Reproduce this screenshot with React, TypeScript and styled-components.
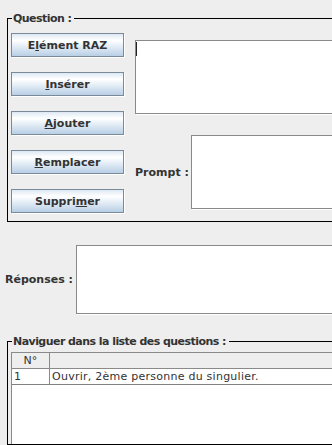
import React from "react";
import styled, { createGlobalStyle } from "styled-components";

const GlobalStyle = createGlobalStyle`
  html, body {
    margin: 0;
    padding: 0;
    background: #eeeeee;
    overflow: hidden;
  }
  body {
    font-family: "DejaVu Sans", "Liberation Sans", sans-serif;
    color: #333333;
  }
`;

const Viewport = styled.div`
  width: 332px;
  height: 445px;
  overflow: hidden;
`;

const Page = styled.div`
  width: 380px;
  height: 445px;
  padding-top: 18px;
  box-sizing: border-box;
  display: flex;
  flex-direction: column;
`;

const Group = styled.div<{ $h?: number; $mt?: number }>`
  position: relative;
  margin-left: 7px;
  margin-top: ${(p) => p.$mt ?? 0}px;
  border: 1px solid #000000;
  ${(p) => (p.$h ? `height: ${p.$h}px;` : "flex: 1;")}
  box-sizing: border-box;
  display: flex;
  flex-direction: column;
`;

const GroupTitle = styled.span`
  position: absolute;
  top: -8px;
  left: 4px;
  padding: 0 3px 0 1px;
  background: #eeeeee;
  font-size: 11px;
  font-weight: bold;
  letter-spacing: -0.55px;
  line-height: 15px;
  color: #333333;
  white-space: nowrap;
`;

const QuestionBody = styled.div`
  display: flex;
  padding: 14px 0 0 3px;
  gap: 11px;
`;

const ButtonColumn = styled.div`
  display: flex;
  flex-direction: column;
  gap: 15px;
  width: 113px;
  flex-shrink: 0;
`;

const Button = styled.button`
  height: 24px;
  width: 113px;
  border: 1px solid #7a8a99;
  border-radius: 0;
  background: linear-gradient(
    to bottom,
    #dde8f3 0%,
    #ffffff 28%,
    #f4f8fc 40%,
    #b8cfe5 100%
  );
  box-shadow: 1px 1px 0 #ffffff;
  font-family: "DejaVu Sans", "Liberation Sans", sans-serif;
  font-size: 11px;
  font-weight: bold;
  color: #333333;
  padding: 0;
  cursor: default;
  u {
    text-decoration: underline;
    text-underline-offset: 1px;
  }
`;

const RightColumn = styled.div`
  flex: 1;
  display: flex;
  flex-direction: column;
  padding-top: 7px;
`;

const TextBox = styled.div<{ $h: number; $fixed?: boolean }>`
  height: ${(p) => p.$h}px;
  background: #ffffff;
  border: 1px solid #8a8a8a;
  box-shadow: 1px 1px 0 #ffffff;
  box-sizing: border-box;
  flex: ${(p) => (p.$fixed ? "none" : "1")};
  padding: 1px 0 0 0;
`;

const Caret = styled.span`
  display: block;
  width: 1px;
  height: 14px;
  background: #222222;
`;

const PromptRow = styled.div`
  display: flex;
  align-items: center;
  margin-top: 21px;
  gap: 4px;
`;

const FieldLabel = styled.span<{ $w: number }>`
  width: ${(p) => p.$w}px;
  flex-shrink: 0;
  font-size: 11px;
  font-weight: bold;
  color: #333333;
  white-space: nowrap;
`;

const ReponsesRow = styled.div`
  display: flex;
  align-items: center;
  margin-top: 23px;
  padding-left: 5px;
  gap: 4px;
`;

const TableArea = styled.div`
  flex: 1;
  margin: 10px 0 0 3px;
  background: #ffffff;
  border-left: 1px solid #8a8a8a;
  border-top: 1px solid #8a8a8a;
  display: flex;
  flex-direction: column;
`;

const Row = styled.div<{ $header?: boolean }>`
  display: grid;
  grid-template-columns: 38px 1fr;
  height: 16px;
  box-sizing: border-box;
  background: ${(p) => (p.$header ? "#eeeeee" : "#ffffff")};
  border-bottom: 1px solid ${(p) => (p.$header ? "#8a8a8a" : "#808080")};
  font-size: 11px;
  line-height: 15px;
  letter-spacing: 0.25px;
  color: #333333;
`;

const Cell = styled.div<{ $center?: boolean; $divider?: boolean }>`
  padding-left: ${(p) => (p.$center ? 0 : 2)}px;
  text-align: ${(p) => (p.$center ? "center" : "left")};
  border-right: ${(p) => (p.$divider ? "1px solid #8a8a8a" : "none")};
  white-space: nowrap;
  overflow: hidden;
`;

export default function App() {
  return (
    <>
      <GlobalStyle />
      <Viewport>
        <Page>
          <Group $h={204}>
            <GroupTitle>Question :</GroupTitle>
            <QuestionBody>
              <ButtonColumn>
                <Button>
                  E<u>l</u>ément RAZ
                </Button>
                <Button>
                  <u>I</u>nsérer
                </Button>
                <Button>
                  <u>A</u>jouter
                </Button>
                <Button>
                  <u>R</u>emplacer
                </Button>
                <Button>
                  Suppri<u>m</u>er
                </Button>
              </ButtonColumn>
              <RightColumn>
                <TextBox $h={74} $fixed>
                  <Caret />
                </TextBox>
                <PromptRow>
                  <FieldLabel $w={52}>Prompt :</FieldLabel>
                  <TextBox $h={74} />
                </PromptRow>
              </RightColumn>
            </QuestionBody>
          </Group>
          <ReponsesRow>
            <FieldLabel $w={67}>Réponses :</FieldLabel>
            <TextBox $h={69} />
          </ReponsesRow>
          <Group $mt={27}>
            <GroupTitle>Naviguer dans la liste des questions :</GroupTitle>
            <TableArea>
              <Row $header>
                <Cell $center $divider>
                  N°
                </Cell>
                <Cell />
              </Row>
              <Row>
                <Cell $divider>1</Cell>
                <Cell>Ouvrir, 2ème personne du singulier.</Cell>
              </Row>
            </TableArea>
          </Group>
        </Page>
      </Viewport>
    </>
  );
}
